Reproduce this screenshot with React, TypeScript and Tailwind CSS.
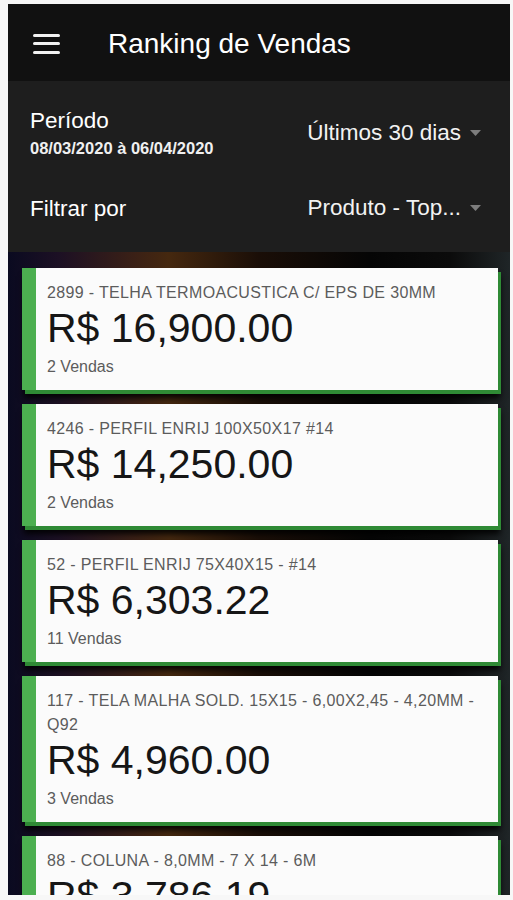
const items = [
  { title: "2899 - TELHA TERMOACUSTICA C/ EPS DE 30MM", value: "R$ 16,900.00", sales: "2 Vendas" },
  { title: "4246 - PERFIL ENRIJ 100X50X17 #14", value: "R$ 14,250.00", sales: "2 Vendas" },
  { title: "52 - PERFIL ENRIJ 75X40X15 - #14", value: "R$ 6,303.22", sales: "11 Vendas" },
  { title: "117 - TELA MALHA SOLD. 15X15 - 6,00X2,45 - 4,20MM - Q92", value: "R$ 4,960.00", sales: "3 Vendas" },
  { title: "88 - COLUNA - 8,0MM - 7 X 14 - 6M", value: "R$ 3,786.19", sales: "4 Vendas" },
];

function Caret() {
  return (
    <svg width="11" height="6" viewBox="0 0 11 6" className="ml-[9px] shrink-0">
      <path d="M0 0 L11 0 L5.5 6 Z" fill="#7d7d7d" />
    </svg>
  );
}

function SaleCard({ title, value, sales }: { title: string; value: string; sales: string }) {
  return (
    <div className="mb-[14px] flex bg-[#fbfbfb] border-l-[14px] border-[#4caf50] shadow-[3px_4px_0_#2f8a35,2px_8px_6px_rgba(0,0,0,0.9)]">
      <div className="flex-1 pl-[11px] pr-3 pt-[13px] pb-[13px]">
        <div className="text-[16px] leading-[24px] tracking-[0.35px] text-[#5c5c5c]">{title}</div>
        <div className="text-[41px] leading-[47px] text-[#161616]">{value}</div>
        <div className="mt-[5px] text-[16px] leading-[20px] text-[#5c5c5c]">{sales}</div>
      </div>
    </div>
  );
}

export default function App() {
  return (
    <div className="h-[900px] w-full overflow-hidden bg-[#f7f7f7] pt-[4px] pl-[8px] pr-[3px] pb-[5px] font-['Liberation_Sans',Arial,sans-serif]">
      <div className="flex h-full flex-col overflow-hidden">
        <header className="flex h-[77px] shrink-0 items-center bg-[#111111] pl-[25px] pt-[2px]">
          <div className="flex w-[27px] flex-col gap-[5.5px]">
            <span className="block h-[3px] rounded-sm bg-[#f2f2f2]" />
            <span className="block h-[3px] rounded-sm bg-[#f2f2f2]" />
            <span className="block h-[3px] rounded-sm bg-[#f2f2f2]" />
          </div>
          <h1 className="ml-[48px] text-[28px] leading-[34px] text-white">Ranking de Vendas</h1>
        </header>

        <section className="h-[171px] shrink-0 bg-[#1e1e1e] pl-[22px] pr-[29px]">
          <div className="flex items-center justify-between pt-[27px]">
            <div>
              <div className="text-[22.5px] leading-[26px] text-white">Período</div>
              <div className="mt-[4px] text-[16.5px] font-bold leading-[20px] text-[#f0f0f0]">
                08/03/2020 à 06/04/2020
              </div>
            </div>
            <div className="flex items-center text-[22.5px] leading-[26px] text-[#f2f2f2]">
              Últimos 30 dias
              <Caret />
            </div>
          </div>
          <div className="mt-[38px] flex items-center justify-between">
            <div className="text-[22.5px] leading-[26px] text-white">Filtrar por</div>
            <div className="-mt-[2px] flex items-center text-[22.5px] leading-[26px] text-[#f2f2f2]">
              Produto - Top...
              <Caret />
            </div>
          </div>
        </section>

        <main className="flex-1 overflow-hidden bg-[linear-gradient(to_right,#0a0a20_0%,#1c1024_10%,#3a2016_25%,#45280f_32%,#1a0e07_50%,#050505_72%,#0b0b0b_88%,#1f2527_100%)] pl-[14px] pr-[12px] pt-[16px]">
          {items.map((it) => (
            <SaleCard key={it.title} {...it} />
          ))}
        </main>
      </div>
    </div>
  );
}
